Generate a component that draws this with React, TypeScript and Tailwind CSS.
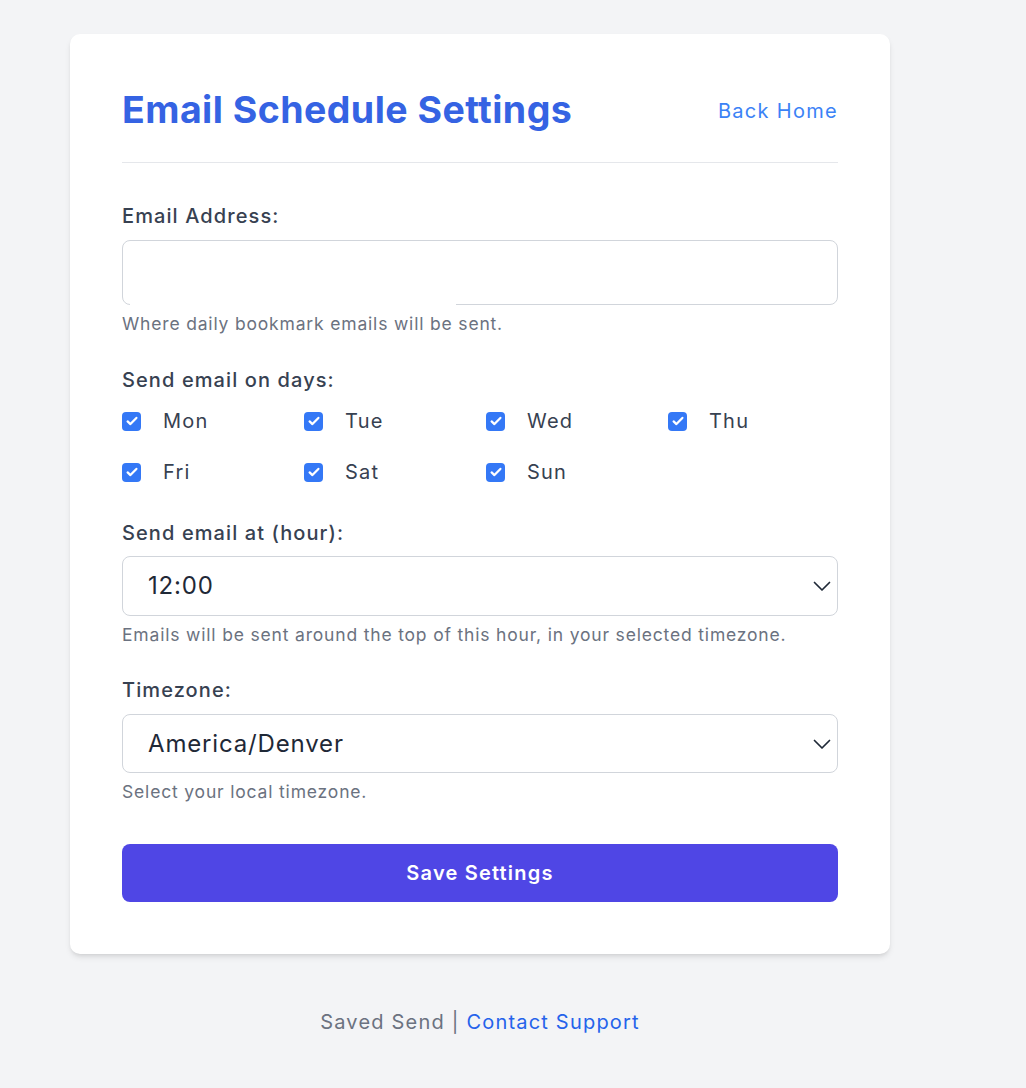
import { useState } from "react";

const DAYS = ["Mon", "Tue", "Wed", "Thu", "Fri", "Sat", "Sun"];

function Chevron() {
  return (
    <svg
      className="pointer-events-none absolute right-[6px] top-1/2 h-[20px] w-[20px] -translate-y-1/2 text-[#1f2937]"
      viewBox="0 0 20 20"
      fill="none"
      stroke="currentColor"
      strokeWidth="1.7"
      strokeLinecap="round"
      strokeLinejoin="round"
    >
      <path d="M2.5 6.5l7.5 7.5 7.5-7.5" />
    </svg>
  );
}

function DayBox({ label, checked, onToggle }: { label: string; checked: boolean; onToggle: () => void }) {
  return (
    <label className="flex h-[28px] cursor-pointer items-center gap-[22px]" onClick={onToggle}>
      <span
        className={
          checked
            ? "flex h-[19px] w-[19px] items-center justify-center rounded-[4px] bg-[#3478f6]"
            : "flex h-[19px] w-[19px] items-center justify-center rounded-[4px] border border-gray-400 bg-white"
        }
      >
        {checked && (
          <svg viewBox="0 0 16 16" className="h-[14px] w-[14px]" fill="none" stroke="white" strokeWidth="2.6" strokeLinecap="round" strokeLinejoin="round">
            <path d="M3 8.5l3.2 3L13 4.5" />
          </svg>
        )}
      </span>
      <span className="text-[20px] tracking-[0.06em] text-[#374151]">{label}</span>
    </label>
  );
}

export default function App() {
  const [days, setDays] = useState<string[]>(DAYS);
  const [hour, setHour] = useState("12:00");
  const [tz, setTz] = useState("America/Denver");

  const toggle = (d: string) =>
    setDays((prev) => (prev.includes(d) ? prev.filter((x) => x !== d) : [...prev, d]));

  return (
    <div className="min-h-screen bg-[#f3f4f6] pt-[34px] pb-10" style={{ fontFamily: "Inter, 'Noto Sans', sans-serif" }}>
      <div className="w-[960px]">
        {/* Card */}
        <div className="mx-auto w-[820px] rounded-[10px] bg-white px-[52px] pt-[52px] pb-[52px] shadow-[0_4px_6px_-1px_rgba(0,0,0,0.1),0_2px_4px_-2px_rgba(0,0,0,0.1)]">
          <div className="flex items-center justify-between border-b border-[#e5e7eb] pb-[28px]">
            <h1 className="text-[37.5px] leading-[48px] font-bold tracking-[0.012em] text-[#3563e3]">Email Schedule Settings</h1>
            <a href="#" className="mt-[2px] text-[20px] leading-[28px] tracking-[0.065em] text-[#3b82f6]">Back Home</a>
          </div>

          <form className="pt-[39px]" onSubmit={(e) => e.preventDefault()}>
            <label className="block text-[20px] leading-[28px] font-medium tracking-[0.055em] text-[#374151]">Email Address:</label>
            <div className="relative mt-[10px]">
              <input
                type="email"
                className="block h-[65px] w-full rounded-[8px] border border-[#d1d5db] bg-white px-[20px] text-[20px] text-[#1f2937] outline-none"
              />
              <div className="absolute bottom-[-2px] left-[8px] h-[4px] w-[326px] bg-white" />
            </div>
            <p className="mt-[7px] text-[17.5px] leading-[24px] tracking-[0.047em] text-[#6b7280]">Where daily bookmark emails will be sent.</p>

            <label className="mt-[30px] block text-[20px] leading-[28px] font-medium tracking-[0.055em] text-[#374151]">Send email on days:</label>
            <div className="mt-[13px] grid grid-cols-4 gap-x-[12px] gap-y-[23px]">
              {DAYS.map((d) => (
                <DayBox key={d} label={d} checked={days.includes(d)} onToggle={() => toggle(d)} />
              ))}
            </div>

            <label className="mt-[33px] block text-[20px] leading-[28px] font-medium tracking-[0.055em] text-[#374151]">Send email at (hour):</label>
            <div className="relative mt-[9px]">
              <select
                value={hour}
                onChange={(e) => setHour(e.target.value)}
                className="block h-[60px] w-full appearance-none rounded-[8px] border border-[#d1d5db] bg-white pl-[25px] text-[24px] tracking-[0.035em] text-[#1f2937] outline-none"
              >
                {Array.from({ length: 24 }, (_, i) => `${String(i).padStart(2, "0")}:00`).map((h) => (
                  <option key={h} value={h}>{h}</option>
                ))}
              </select>
              <Chevron />
            </div>
            <p className="mt-[7px] text-[17.5px] leading-[24px] tracking-[0.047em] text-[#6b7280]">
              Emails will be sent around the top of this hour, in your selected timezone.
            </p>

            <label className="mt-[29px] block text-[20px] leading-[28px] font-medium tracking-[0.055em] text-[#374151]">Timezone:</label>
            <div className="relative mt-[10px]">
              <select
                value={tz}
                onChange={(e) => setTz(e.target.value)}
                className="block h-[59px] w-full appearance-none rounded-[8px] border border-[#d1d5db] bg-white pl-[25px] text-[24px] tracking-[0.035em] text-[#1f2937] outline-none"
              >
                <option>America/New_York</option>
                <option>America/Chicago</option>
                <option>America/Denver</option>
                <option>America/Los_Angeles</option>
                <option>UTC</option>
              </select>
              <Chevron />
            </div>
            <p className="mt-[7px] text-[17.5px] leading-[24px] tracking-[0.047em] text-[#6b7280]">Select your local timezone.</p>

            <button
              type="submit"
              className="mt-[40px] flex h-[58px] w-full items-center justify-center rounded-[8px] bg-[#4f46e5] text-[20px] font-semibold tracking-[0.06em] text-white"
            >
              Save Settings
            </button>
          </form>
        </div>

        {/* Footer */}
        <div className="mt-[54px] text-center text-[20px] leading-[28px] tracking-[0.06em] text-[#6b7280]">
          Saved Send <span className="text-[#6b7280]">|</span>{" "}
          <a href="#" className="text-[#2563eb]">Contact Support</a>
        </div>
      </div>
    </div>
  );
}
